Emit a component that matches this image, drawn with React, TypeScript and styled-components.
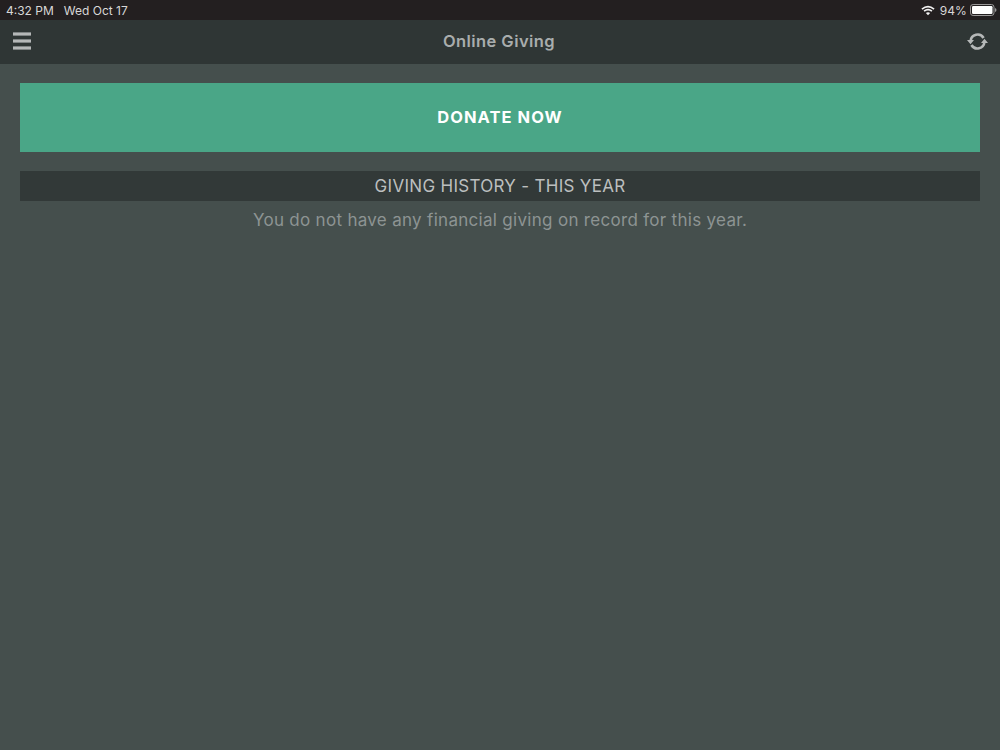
import React from "react";
import styled, { createGlobalStyle } from "styled-components";

const Global = createGlobalStyle`
  html, body { margin: 0; padding: 0; height: 100%; background: #454f4d; }
  #root { height: 100%; }
  * { box-sizing: border-box; }
`;
const Page = styled.div`
  width: 1000px; height: 750px; overflow: hidden; display: flex; flex-direction: column;
  background: #454f4d; font-family: Inter, "Liberation Sans", sans-serif;
`;
const StatusBar = styled.div`
  height: 20px; flex: none; background: #231f20; color: #d8d7d7; display: flex; align-items: center;
  justify-content: space-between; padding: 0 3px 0 6px; font-size: 12px;
  font-family: Inter, "Liberation Sans", Arial, sans-serif;
`;
const StatusGroup = styled.div`
  display: flex; align-items: center;
`;
const DateText = styled.span`
  margin-left: 10px;
`;
const Percent = styled.span`
  margin: 0 3px 0 5px; letter-spacing: 0.1px;
`;
const NavBar = styled.header`
  height: 44px; flex: none; background: #2f3635; display: flex; align-items: center;
  justify-content: space-between; padding: 0 12px 2px 13px; color: #a9aeae;
`;
const NavTitle = styled.h1`
  margin: 0; font-size: 16.5px; font-weight: 600; color: #a9adad; letter-spacing: 0.42px;
`;
const Content = styled.main`
  padding: 19px 20px 0; display: flex; flex-direction: column;
`;
const Donate = styled.button`
  height: 69px; border: 0; border-radius: 0; background: #4aa687; color: #fff; font: inherit;
  font-size: 16.5px; font-weight: 700; letter-spacing: 1.05px; padding: 0 0 1px; margin-bottom: 19px;
`;
const SectionHeader = styled.h2`
  margin: 0; height: 30px; background: #323938; color: #bcbfbf; font-size: 17px; font-weight: 400;
  letter-spacing: 0.3px; display: flex; align-items: center; justify-content: center;
`;
const Empty = styled.p`
  margin: 9px 0 0; text-align: center; color: #8d9493; font-size: 17px; line-height: 20px; font-weight: 400;
  letter-spacing: 0.3px;
`;

const Wifi = () => (
  <svg width="14" height="11" viewBox="0 0 15 11" fill="none" stroke="#f2f2f2" strokeWidth="1.8">
    <path d="M1 4 Q7.5 -1.2 14 4" />
    <path d="M3.3 6.2 Q7.5 2.8 11.7 6.2" />
    <path d="M7.5 10.6 L5.2 8.2 Q7.5 6.5 9.8 8.2 Z" fill="#f2f2f2" stroke="none" />
  </svg>
);
const Battery = () => (
  <svg width="27" height="12" viewBox="0 0 27 12">
    <rect x="0.5" y="0.5" width="23.5" height="11" rx="2.6" fill="none" stroke="#9a9898" />
    <rect x="2" y="2" width="20.5" height="8" rx="1.2" fill="#fff" />
    <path d="M25 4 Q26.5 4.5 26.5 6 Q26.5 7.5 25 8 Z" fill="#9a9898" />
  </svg>
);
const Menu = () => (
  <svg width="18" height="18" viewBox="0 0 18 18" fill="#b5b8b8">
    <rect x="0" y="0.4" width="18" height="3.2" />
    <rect x="0" y="7.4" width="18" height="3.2" />
    <rect x="0" y="14.4" width="18" height="3.2" />
  </svg>
);
const Refresh = () => (
  <svg width="21" height="19" viewBox="0 0 21 19" fill="none">
    <path d="M3.6 9 A7 7 0 0 1 16.6 6" stroke="#b5b8b8" strokeWidth="2.6" />
    <path d="M17.4 10 A7 7 0 0 1 4.4 13" stroke="#b5b8b8" strokeWidth="2.6" />
    <path d="M0 8 L7 8 L3.5 12.2 Z M21 11 L14 11 L17.5 6.8 Z" fill="#b5b8b8" />
  </svg>
);

export default function App() {
  return (
    <Page>
      <Global />
      <StatusBar>
        <StatusGroup>
          <span>4:32 PM</span>
          <DateText>Wed Oct 17</DateText>
        </StatusGroup>
        <StatusGroup>
          <Wifi />
          <Percent>94%</Percent>
          <Battery />
        </StatusGroup>
      </StatusBar>
      <NavBar>
        <Menu />
        <NavTitle>Online Giving</NavTitle>
        <Refresh />
      </NavBar>
      <Content>
        <Donate>DONATE NOW</Donate>
        <SectionHeader>GIVING HISTORY - THIS YEAR</SectionHeader>
        <Empty>You do not have any financial giving on record for this year.</Empty>
      </Content>
    </Page>
  );
}
